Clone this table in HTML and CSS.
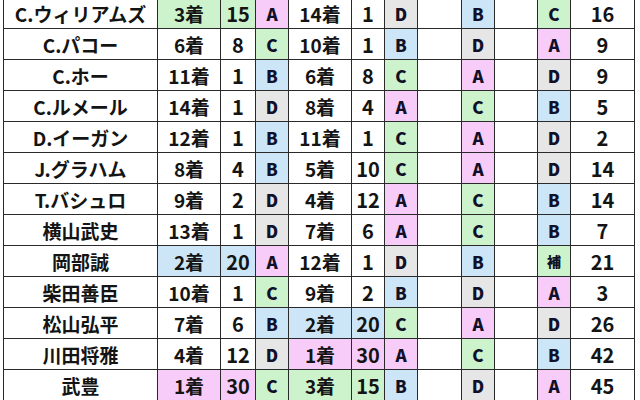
FILE: index.html
```html
<!DOCTYPE html>
<html lang="ja">
<head>
<meta charset="utf-8">
<link rel="stylesheet" href="styles.css">
</head>
<body>
<table class="tbl">
<colgroup>
<col class="c-name"><col class="c-res"><col class="c-num"><col class="c-rk">
<col class="c-res"><col class="c-num2"><col class="c-rk">
<col class="c-blank"><col class="c-rk"><col class="c-blank2"><col class="c-rk"><col class="c-tot">
</colgroup>
<tbody>
<tr><td class="name">C.ウィリアムズ</td><td class="res g">3着</td><td class="num g">15</td><td class="rk p">A</td><td class="res">14着</td><td class="num">1</td><td class="rk d">D</td><td class="blank"></td><td class="rk b">B</td><td class="blank"></td><td class="rk g">C</td><td class="tot">16</td></tr>
<tr><td class="name">C.パコー</td><td class="res">6着</td><td class="num">8</td><td class="rk g">C</td><td class="res">10着</td><td class="num">1</td><td class="rk b">B</td><td class="blank"></td><td class="rk d">D</td><td class="blank"></td><td class="rk p">A</td><td class="tot">9</td></tr>
<tr><td class="name">C.ホー</td><td class="res">11着</td><td class="num">1</td><td class="rk b">B</td><td class="res">6着</td><td class="num">8</td><td class="rk g">C</td><td class="blank"></td><td class="rk p">A</td><td class="blank"></td><td class="rk d">D</td><td class="tot">9</td></tr>
<tr><td class="name">C.ルメール</td><td class="res">14着</td><td class="num">1</td><td class="rk d">D</td><td class="res">8着</td><td class="num">4</td><td class="rk p">A</td><td class="blank"></td><td class="rk g">C</td><td class="blank"></td><td class="rk b">B</td><td class="tot">5</td></tr>
<tr><td class="name">D.イーガン</td><td class="res">12着</td><td class="num">1</td><td class="rk b">B</td><td class="res">11着</td><td class="num">1</td><td class="rk g">C</td><td class="blank"></td><td class="rk p">A</td><td class="blank"></td><td class="rk d">D</td><td class="tot">2</td></tr>
<tr><td class="name">J.グラハム</td><td class="res">8着</td><td class="num">4</td><td class="rk b">B</td><td class="res">5着</td><td class="num">10</td><td class="rk g">C</td><td class="blank"></td><td class="rk p">A</td><td class="blank"></td><td class="rk d">D</td><td class="tot">14</td></tr>
<tr><td class="name">T.バシュロ</td><td class="res">9着</td><td class="num">2</td><td class="rk d">D</td><td class="res">4着</td><td class="num">12</td><td class="rk p">A</td><td class="blank"></td><td class="rk g">C</td><td class="blank"></td><td class="rk b">B</td><td class="tot">14</td></tr>
<tr><td class="name">横山武史</td><td class="res">13着</td><td class="num">1</td><td class="rk d">D</td><td class="res">7着</td><td class="num">6</td><td class="rk p">A</td><td class="blank"></td><td class="rk g">C</td><td class="blank"></td><td class="rk b">B</td><td class="tot">7</td></tr>
<tr><td class="name">岡部誠</td><td class="res b">2着</td><td class="num b">20</td><td class="rk p">A</td><td class="res">12着</td><td class="num">1</td><td class="rk d">D</td><td class="blank"></td><td class="rk b">B</td><td class="blank"></td><td class="rk g hk">補</td><td class="tot">21</td></tr>
<tr><td class="name">柴田善臣</td><td class="res">10着</td><td class="num">1</td><td class="rk g">C</td><td class="res">9着</td><td class="num">2</td><td class="rk b">B</td><td class="blank"></td><td class="rk d">D</td><td class="blank"></td><td class="rk p">A</td><td class="tot">3</td></tr>
<tr><td class="name">松山弘平</td><td class="res">7着</td><td class="num">6</td><td class="rk b">B</td><td class="res b">2着</td><td class="num b">20</td><td class="rk g">C</td><td class="blank"></td><td class="rk p">A</td><td class="blank"></td><td class="rk d">D</td><td class="tot">26</td></tr>
<tr><td class="name">川田将雅</td><td class="res">4着</td><td class="num">12</td><td class="rk d">D</td><td class="res p">1着</td><td class="num p">30</td><td class="rk p">A</td><td class="blank"></td><td class="rk g">C</td><td class="blank"></td><td class="rk b">B</td><td class="tot">42</td></tr>
<tr><td class="name">武豊</td><td class="res p">1着</td><td class="num p">30</td><td class="rk g">C</td><td class="res g">3着</td><td class="num g">15</td><td class="rk b">B</td><td class="blank"></td><td class="rk d">D</td><td class="blank"></td><td class="rk p">A</td><td class="tot">45</td></tr>
</tbody>
</table>
</body>
</html>
```
FILE: styles.css
```css
html, body {
  margin: 0;
  padding: 0;
  background: #ffffff;
}
body {
  width: 640px;
  height: 400px;
  overflow: hidden;
}
.tbl {
  margin: -3px 0 0 3px;
  width: 632px;
  table-layout: fixed;
  border-collapse: collapse;
  font-family: "Noto Sans CJK JP", "Noto Sans", sans-serif;
  color: #141414;
}
.c-name { width: 154px; }
.c-res { width: 63px; }
.c-num { width: 35px; }
.c-num2 { width: 33px; }
.c-rk { width: 33px; }
.c-blank { width: 44px; }
.c-blank2 { width: 43px; }
.c-tot { width: 64px; }
.tbl tr { height: 31px; }
.tbl td {
  border: 1px solid #2a2a2a;
  padding: 0;
  text-align: center;
  vertical-align: middle;
  font-size: 19px;
  font-weight: 700;
  line-height: 29px;
  white-space: nowrap;
  overflow: hidden;
}
.tbl td.num, .tbl td.tot {
  font-size: 20px;
}
.tbl td.rk {
  font-family: "Noto Sans CJK JP", sans-serif;
  font-size: 17px;
  font-weight: 900;
  color: #101028;
}
.tbl td.hk {
  font-size: 14px;
}
.tbl td.blank {
  border-left-color: #9a9a9a;
}
.g { background: #ccf3cc; }
.p { background: #f8ccf8; }
.b { background: #cce6f8; }
.d { background: #e6e6e6; }
```
